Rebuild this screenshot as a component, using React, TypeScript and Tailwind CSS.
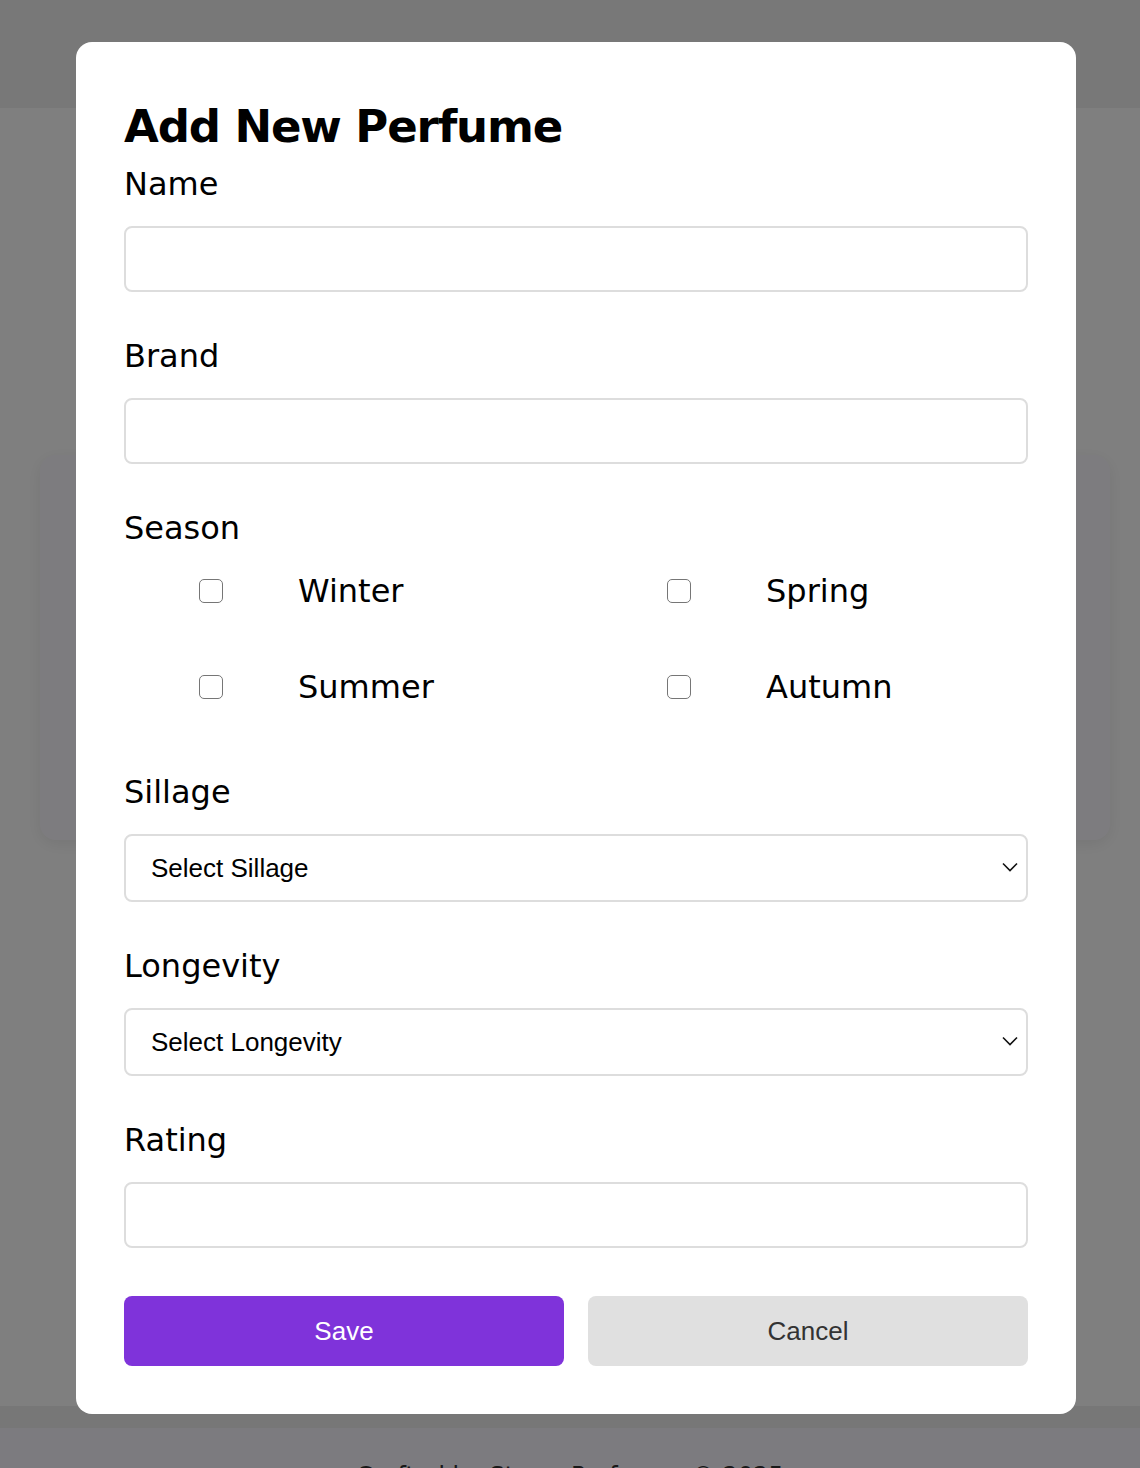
import { useState } from "react";

const seasons = ["Winter", "Spring", "Summer", "Autumn"];

export default function App() {
  const [picked, setPicked] = useState<string[]>([]);

  const toggle = (s: string) =>
    setPicked((p) => (p.includes(s) ? p.filter((x) => x !== s) : [...p, s]));

  return (
    <div className="relative min-h-screen bg-white font-['DejaVu_Sans',sans-serif]">
      {/* PAGE BEHIND */}
      <header className="h-[108px] bg-[#f0f0f0]" />
      <main className="h-[1298px] pt-[347px]">
        <div className="ml-[40px] h-[385px] w-[1070px] rounded-[16px] bg-[#fbf9ff] shadow-[0_4px_16px_rgba(0,0,0,0.08)]" />
      </main>
      <div className="h-[22px] bg-[#efefef]" />
      <footer className="h-[120px] bg-[#f9f7ff] pt-[30px] text-center text-[24px] text-[#333]">
        Crafted by Stowe Perfumes © 2025
      </footer>

      {/* OVERLAY */}
      <div className="fixed inset-0 bg-black/50">
        <div className="absolute left-[76px] top-[42px] w-[1000px] rounded-[16px] bg-white px-[48px] pt-[56px] pb-[48px]">
          <h2 className="text-[45px] leading-[58px] font-bold tracking-[-0.025em] text-black">
            Add New Perfume
          </h2>

          <Field label="Name" top="mt-[6px]">
            <input className="block h-[66px] w-full rounded-[8px] border-2 border-[#dddddd] px-[24px] text-[26px] outline-none" />
          </Field>

          <Field label="Brand">
            <input className="block h-[66px] w-full rounded-[8px] border-2 border-[#dddddd] px-[24px] text-[26px] outline-none" />
          </Field>

          <div className="mt-[42px]">
            <p className="text-[32px] leading-[45px] text-black">Season</p>
            <div className="mt-[18px] grid grid-cols-2 gap-x-[32px] gap-y-[52px]">
              {seasons.map((s) => (
                <label key={s} className="flex h-[44px] items-center">
                  <span className="flex w-[174px] items-center justify-center">
                    <input
                      type="checkbox"
                      checked={picked.includes(s)}
                      onChange={() => toggle(s)}
                      className="h-[24px] w-[24px] appearance-none rounded-[5px] border-[1.5px] border-[#767676] bg-white checked:bg-[#7e33db]"
                    />
                  </span>
                  <span className="text-[32px] text-black">{s}</span>
                </label>
              ))}
            </div>
          </div>

          <div className="mt-[61px]">
            <p className="text-[32px] leading-[45px] text-black">Sillage</p>
            <SelectBox placeholder="Select Sillage" options={["Soft", "Moderate", "Strong", "Enormous"]} />
          </div>

          <Field label="Longevity">
            <SelectBox placeholder="Select Longevity" options={["Weak", "Moderate", "Long Lasting", "Eternal"]} />
          </Field>

          <Field label="Rating">
            <input className="block h-[66px] w-full rounded-[8px] border-2 border-[#dddddd] px-[24px] text-[26px] outline-none" />
          </Field>

          <div className="mt-[48px] grid grid-cols-2 gap-[24px] font-['Liberation_Sans',sans-serif]">
            <button className="h-[70px] rounded-[8px] bg-[#7f33da] text-[26px] text-white">
              Save
            </button>
            <button className="h-[70px] rounded-[8px] bg-[#e0e0e0] text-[26px] text-[#333333]">
              Cancel
            </button>
          </div>
        </div>
      </div>
    </div>
  );
}

function Field({
  label,
  top = "mt-[42px]",
  children,
}: {
  label: string;
  top?: string;
  children: React.ReactNode;
}) {
  return (
    <div className={top}>
      <p className="text-[32px] leading-[45px] text-black">{label}</p>
      <div className="mt-[19px]">{children}</div>
    </div>
  );
}

function SelectBox({ placeholder, options }: { placeholder: string; options: string[] }) {
  return (
    <div className="relative mt-[19px]">
      <select
        defaultValue=""
        className="block h-[68px] w-full appearance-none rounded-[8px] border-2 border-[#dddddd] bg-white pl-[25px] font-['Liberation_Sans',sans-serif] text-[26px] text-black outline-none"
      >
        <option value="" disabled>
          {placeholder}
        </option>
        {options.map((o) => (
          <option key={o}>{o}</option>
        ))}
      </select>
      <svg
        className="pointer-events-none absolute right-[10px] top-[28px]"
        width="16"
        height="10"
        viewBox="0 0 16 10"
        fill="none"
        stroke="#111"
        strokeWidth="1.6"
      >
        <path d="M1 1.5l7 7 7-7" />
      </svg>
    </div>
  );
}
